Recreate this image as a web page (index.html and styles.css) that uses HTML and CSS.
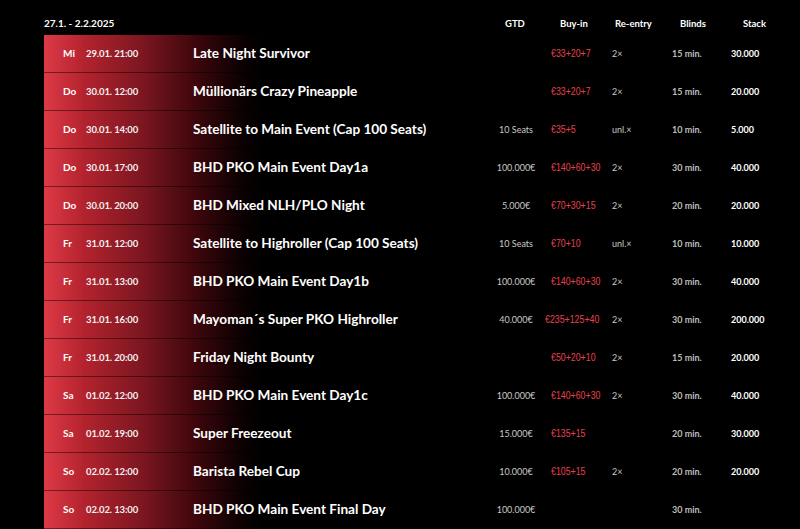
FILE: index.html
```html
<!DOCTYPE html>
<html lang="de">
<head>
<meta charset="utf-8">
<link rel="stylesheet" href="styles.css">
</head>
<body>
<div class="schedule">
  <div class="head">
    <div class="range">27.1. - 2.2.2025</div>
    <div class="h h-gtd">GTD</div>
    <div class="h h-buy">Buy-in</div>
    <div class="h h-re">Re-entry</div>
    <div class="h h-bl">Blinds</div>
    <div class="h h-st">Stack</div>
  </div>
  <div class="rows">
    <div class="row"><span class="day">Mi</span><span class="date">29.01. 21:00</span><span class="name">Late Night Survivor</span><span class="gtd"></span><span class="buy"><span class="price">€33+20+7</span></span><span class="re">2×</span><span class="bl">15 min.</span><span class="st">30.000</span></div>
    <div class="row"><span class="day">Do</span><span class="date">30.01. 12:00</span><span class="name">Müllionärs Crazy Pineapple</span><span class="gtd"></span><span class="buy"><span class="price">€33+20+7</span></span><span class="re">2×</span><span class="bl">15 min.</span><span class="st">20.000</span></div>
    <div class="row"><span class="day">Do</span><span class="date">30.01. 14:00</span><span class="name">Satellite to Main Event (Cap 100 Seats)</span><span class="gtd">10 Seats</span><span class="buy"><span class="price">€35+5</span></span><span class="re">unl.×</span><span class="bl">10 min.</span><span class="st">5.000</span></div>
    <div class="row"><span class="day">Do</span><span class="date">30.01. 17:00</span><span class="name">BHD PKO Main Event Day1a</span><span class="gtd">100.000€</span><span class="buy"><span class="price">€140+60+30</span></span><span class="re">2×</span><span class="bl">30 min.</span><span class="st">40.000</span></div>
    <div class="row"><span class="day">Do</span><span class="date">30.01. 20:00</span><span class="name">BHD Mixed NLH/PLO Night</span><span class="gtd">5.000€</span><span class="buy"><span class="price">€70+30+15</span></span><span class="re">2×</span><span class="bl">20 min.</span><span class="st">20.000</span></div>
    <div class="row"><span class="day">Fr</span><span class="date">31.01. 12:00</span><span class="name">Satellite to Highroller (Cap 100 Seats)</span><span class="gtd">10 Seats</span><span class="buy"><span class="price">€70+10</span></span><span class="re">unl.×</span><span class="bl">10 min.</span><span class="st">10.000</span></div>
    <div class="row"><span class="day">Fr</span><span class="date">31.01. 13:00</span><span class="name">BHD PKO Main Event Day1b</span><span class="gtd">100.000€</span><span class="buy"><span class="price">€140+60+30</span></span><span class="re">2×</span><span class="bl">30 min.</span><span class="st">40.000</span></div>
    <div class="row"><span class="day">Fr</span><span class="date">31.01. 16:00</span><span class="name">Mayoman´s Super PKO Highroller</span><span class="gtd">40.000€</span><span class="buy wide"><span class="price">€235+125+40</span></span><span class="re">2×</span><span class="bl">30 min.</span><span class="st">200.000</span></div>
    <div class="row"><span class="day">Fr</span><span class="date">31.01. 20:00</span><span class="name">Friday Night Bounty</span><span class="gtd"></span><span class="buy"><span class="price">€50+20+10</span></span><span class="re">2×</span><span class="bl">15 min.</span><span class="st">20.000</span></div>
    <div class="row"><span class="day">Sa</span><span class="date">01.02. 12:00</span><span class="name">BHD PKO Main Event Day1c</span><span class="gtd">100.000€</span><span class="buy"><span class="price">€140+60+30</span></span><span class="re">2×</span><span class="bl">30 min.</span><span class="st">40.000</span></div>
    <div class="row"><span class="day">Sa</span><span class="date">01.02. 19:00</span><span class="name">Super Freezeout</span><span class="gtd">15.000€</span><span class="buy"><span class="price">€135+15</span></span><span class="re"></span><span class="bl">20 min.</span><span class="st">30.000</span></div>
    <div class="row"><span class="day">So</span><span class="date">02.02. 12:00</span><span class="name">Barista Rebel Cup</span><span class="gtd">10.000€</span><span class="buy"><span class="price">€105+15</span></span><span class="re">2×</span><span class="bl">20 min.</span><span class="st">20.000</span></div>
    <div class="row"><span class="day">So</span><span class="date">02.02. 13:00</span><span class="name">BHD PKO Main Event Final Day</span><span class="gtd">100.000€</span><span class="buy"></span><span class="re"></span><span class="bl">30 min.</span><span class="st"></span></div>
  </div>
</div>
</body>
</html>
```

FILE: styles.css
```css
* { box-sizing: border-box; }
html, body {
  margin: 0;
  padding: 0;
  background: #000;
  color: #fff;
  font-family: Lato, "Liberation Sans", sans-serif;
  overflow: hidden;
}
.schedule {
  padding: 13px 20px 0 44px;
}
.head, .row {
  display: grid;
  grid-template-columns: 19px 23px 107px 284px 72px 63px 60px 59px 1fr;
  align-items: center;
}
.head {
  height: 22px;
  padding-bottom: 2px;
  font-size: 9.5px;
  font-weight: 700;
}
.range {
  grid-column: 1 / 5;
  font-size: 10px;
}
.h-gtd { grid-column: 5; padding-left: 28px; }
.h-buy { grid-column: 6; padding-left: 11px; }
.h-re { grid-column: 7; padding-left: 3px; }
.h-bl { grid-column: 8; padding-left: 8px; }
.h-st { grid-column: 9; padding-left: 12px; }

.row {
  height: 38px;
  padding-bottom: 2px;
  background: linear-gradient(90deg, #dd3a46 0px, #b3232e 40px, #7a1620 100px, #3f070c 150px, #180204 185px, #060001 205px, #000 220px);
  box-shadow: inset 0 -1px 0 rgba(0, 0, 0, 0.45);
  font-weight: 700;
  font-size: 9.5px;
}
.day { grid-column: 2; font-size: 10px; }
.date { grid-column: 3; font-size: 9.5px; color: #f2f2f2; letter-spacing: -0.1px; }
.name { grid-column: 4; font-size: 13.6px; white-space: nowrap; }
.gtd { grid-column: 5; color: #c8c8c8; font-weight: 400; text-align: center; font-size: 9px; padding-left: 6px; }
.buy { grid-column: 6; padding-left: 2px; white-space: nowrap; }
.buy.wide { padding-left: 0; margin-left: -4px; }
.price {
  display: inline-block;
  color: #e8414e;
  font-family: "Liberation Sans", sans-serif;
  font-weight: 400;
  font-size: 11px;
  transform: scaleX(0.8);
  transform-origin: left center;
}
.re { grid-column: 7; color: #c8c8c8; font-weight: 400; font-size: 9px; }
.bl { grid-column: 8; color: #bdbdbd; font-size: 9px; }
.st { grid-column: 9; color: #fff; font-size: 9px; }
```
